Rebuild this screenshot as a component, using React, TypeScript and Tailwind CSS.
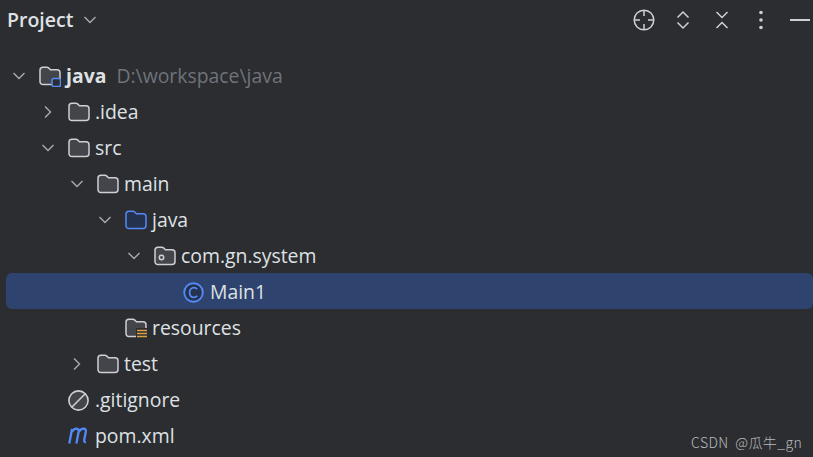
import React from 'react';

type Kind = 'module' | 'folder' | 'source' | 'package' | 'resources' | 'class' | 'ignore' | 'maven';

type Node = {
  name: string;
  indent: string;
  kind: Kind;
  open?: boolean;
  closed?: boolean;
  bold?: boolean;
  hint?: string;
  selected?: boolean;
};

const nodes: Node[] = [
  { name: 'java', indent: 'pl-[3px]', kind: 'module', open: true, bold: true, hint: 'D:\\workspace\\java' },
  { name: '.idea', indent: 'pl-[32px]', kind: 'folder', closed: true },
  { name: 'src', indent: 'pl-[32px]', kind: 'folder', open: true },
  { name: 'main', indent: 'pl-[61px]', kind: 'folder', open: true },
  { name: 'java', indent: 'pl-[89px]', kind: 'source', open: true },
  { name: 'com.gn.system', indent: 'pl-[118px]', kind: 'package', open: true },
  { name: 'Main1', indent: 'pl-[147px]', kind: 'class', selected: true },
  { name: 'resources', indent: 'pl-[89px]', kind: 'resources' },
  { name: 'test', indent: 'pl-[61px]', kind: 'folder', closed: true },
  { name: '.gitignore', indent: 'pl-[32px]', kind: 'ignore' },
  { name: 'pom.xml', indent: 'pl-[32px]', kind: 'maven' },
];

const folderPath = 'M1 4.2C1 2.4 2.2 1.2 4 1.2H7.8C8.6 1.2 9.2 1.5 9.8 2.1L11.4 3.8H18C19.8 3.8 21 5 21 6.8V15.5C21 17.3 19.8 18.5 18 18.5H4C2.2 18.5 1 17.3 1 15.5Z';

function TreeIcon({ kind }: { kind: Kind }) {
  if (kind === 'class') {
    return (
      <svg width="21" height="21" viewBox="0 0 21 21" fill="none">
        <circle cx="10.5" cy="10.5" r="9.3" fill="#25324d" stroke="#548af7" strokeWidth="1.9" />
        <path d="M14.2 7.2C13.3 6.1 12.2 5.6 10.9 5.6C8.3 5.6 6.6 7.7 6.6 10.5C6.6 13.3 8.3 15.4 10.9 15.4C12.2 15.4 13.3 14.9 14.2 13.8" stroke="#548af7" strokeWidth="1.7" />
      </svg>
    );
  }
  if (kind === 'ignore') {
    return (
      <svg width="21" height="21" viewBox="0 0 21 21" fill="none">
        <circle cx="10.5" cy="10.5" r="9.6" fill="#43454a" stroke="#ced0d6" strokeWidth="1.6" />
        <path d="M4 17L17 4" stroke="#ced0d6" strokeWidth="1.6" />
      </svg>
    );
  }
  if (kind === 'maven') {
    return (
      <svg width="22" height="21" viewBox="0 0 22 21" fill="none">
        <path d="M1.3 17.5L4 3M3.7 6C5.1 3.7 6.7 2.6 8.3 2.6C10.2 2.6 10.9 3.9 10.6 5.8L8.4 17.5M10.8 5.8C12.2 3.6 13.9 2.6 15.5 2.6C17.4 2.6 18.1 3.9 17.8 5.8L16.2 14C15.9 15.7 16.6 16.4 18 16" stroke="#548af7" strokeWidth="2.3" />
      </svg>
    );
  }
  const blue = kind === 'source';
  return (
    <svg width="22" height="21" viewBox="0 0 22 21" fill="none">
      <path d={folderPath} fill={blue ? '#25324d' : '#43454a'} stroke={blue ? '#548af7' : '#ced0d6'} strokeWidth="1.5" />
      {kind === 'package' && <circle cx="7.5" cy="11.5" r="2.2" stroke="#ced0d6" strokeWidth="1.5" />}
      {kind === 'module' && <rect x="13" y="12.5" width="8.5" height="8" rx="2" fill="#2b2d30" stroke="#548af7" strokeWidth="1.5" />}
      {kind === 'resources' && (
        <g>
          <rect x="11" y="10" width="11" height="11" fill="#2b2d30" />
          <path d="M12 12.5H22M12 15.5H22M12 18.5H22" stroke="#d9a343" strokeWidth="1.6" />
        </g>
      )}
    </svg>
  );
}

function Chevron({ right }: { right?: boolean }) {
  return (
    <svg width="14" height="14" viewBox="0 0 14 14" fill="none" stroke="#a8abb2" strokeWidth="1.4">
      {right ? <path d="M4 1.5L9.5 7L4 12.5" /> : <path d="M1.5 4L7 9.5L12.5 4" />}
    </svg>
  );
}

function ToolbarIcons() {
  return (
    <div className="flex items-center gap-[17px]">
      <span className="flex w-[22px] justify-center">
        <svg width="22" height="22" viewBox="0 0 22 22" fill="none" stroke="#ced0d6" strokeWidth="1.5">
          <circle cx="11" cy="11" r="9.8" />
          <path d="M11 1.5V7M11 15V20.5M1.5 11H7M15 11H20.5" />
        </svg>
      </span>
      <span className="flex w-[22px] justify-center">
        <svg width="14" height="20" viewBox="0 0 14 20" fill="none" stroke="#ced0d6" strokeWidth="1.5">
          <path d="M1.5 7.5L7 2L12.5 7.5M1.5 12.5L7 18L12.5 12.5" />
        </svg>
      </span>
      <span className="flex w-[22px] justify-center">
        <svg width="14" height="20" viewBox="0 0 14 20" fill="none" stroke="#ced0d6" strokeWidth="1.5">
          <path d="M1.5 2L7 7.5L12.5 2M1.5 18L7 12.5L12.5 18" />
        </svg>
      </span>
      <span className="flex w-[22px] justify-center">
        <svg width="4" height="20" viewBox="0 0 4 20" fill="#ced0d6">
          <circle cx="2" cy="2.5" r="1.8" />
          <circle cx="2" cy="10" r="1.8" />
          <circle cx="2" cy="17.5" r="1.8" />
        </svg>
      </span>
      <span className="flex w-[22px] justify-center">
        <span className="h-[2px] w-[20px] bg-[#ced0d6]" />
      </span>
    </div>
  );
}

export default function App() {
  return (
    <div className="relative h-[457px] w-[813px] overflow-hidden bg-[#2b2d30] font-['Open_Sans','Noto_Sans',sans-serif] text-[#dfe1e5]">
      <div className="flex h-[40px] items-center justify-between pl-[7px] pr-[2px]">
        <div className="flex items-center gap-[10px]">
          <span className="text-[19.5px] font-semibold">Project</span>
          <Chevron />
        </div>
        <ToolbarIcons />
      </div>

      <div className="mt-[17px] pl-[6px]">
        {nodes.map((n, i) => (
          <div
            key={i}
            className={`flex h-[36px] items-center rounded-[6px] pt-[2px] text-[19.4px] ${n.indent} ${n.selected ? 'bg-[#2e436e]' : ''}`}
          >
            <span className="flex w-[20px] shrink-0 justify-center">
              {n.open && <Chevron />}
              {n.closed && <Chevron right />}
            </span>
            <span className="ml-[10px] flex w-[27px] shrink-0">
              <TreeIcon kind={n.kind} />
            </span>
            <span className={n.bold ? 'font-bold' : ''}>{n.name}</span>
            {n.hint && <span className="ml-[10px] text-[#6f737a]">{n.hint}</span>}
          </div>
        ))}
      </div>

      <span className="absolute left-[691px] top-[432px] font-['Noto_Sans_CJK_SC',sans-serif] text-[14px] font-light tracking-[0.45px] [word-spacing:3px] text-[#b9bbbe]">
        CSDN @瓜牛_gn
      </span>
    </div>
  );
}
